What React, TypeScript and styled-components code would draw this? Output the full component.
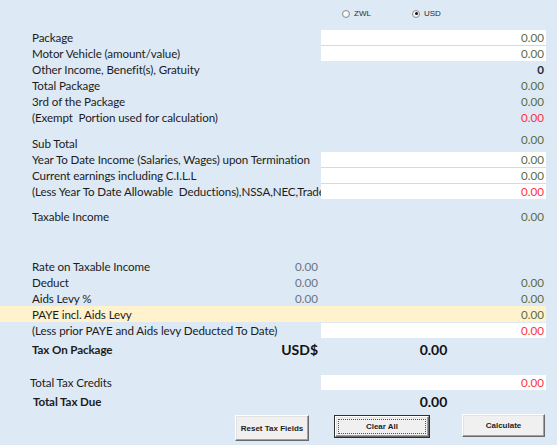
import React from "react";
import styled, { createGlobalStyle } from "styled-components";

const GlobalStyle = createGlobalStyle`
  html, body { margin: 0; padding: 0; background: #dde9f5; }
  * { box-sizing: border-box; }
`;

const Page = styled.div`
  width: 557px;
  height: 445px;
  overflow: hidden;
  background: #dde9f5;
  font-family: Lato, "Liberation Sans", sans-serif;
  font-size: 11.6px;
  color: #1c1c1c;
`;

const RadioBar = styled.div`
  height: 29px;
  display: flex;
  align-items: flex-start;
  padding: 9px 0 0 342px;
`;

const RadioItem = styled.label`
  display: flex;
  align-items: center;
  gap: 4px;
  width: 70px;
  font-family: "Liberation Sans", sans-serif;
  font-size: 8px;
  color: #2b2b2b;
`;

const RadioDot = styled.span<{ $on?: boolean }>`
  width: 8px;
  height: 8px;
  border-radius: 50%;
  border: 1px solid #8c8c8c;
  background: radial-gradient(circle at 40% 40%, #ffffff 0%, #f2f2f2 60%, #dcdcdc 100%);
  display: flex;
  align-items: center;
  justify-content: center;
  &::after {
    content: "";
    width: 3px;
    height: 3px;
    border-radius: 50%;
    background: ${(p) => (p.$on ? "#111" : "transparent")};
  }
`;

const Row = styled.div<{ $mt?: number; $h?: number; $hl?: boolean; $pl?: number }>`
  display: grid;
  grid-template-columns: ${(p) => 289 - ((p.$pl ?? 32) - 32)}px 225px;
  width: 546px;
  padding-left: ${(p) => p.$pl ?? 32}px;
  height: ${(p) => p.$h ?? 16}px;
  margin-top: ${(p) => p.$mt ?? 0}px;
  background: ${(p) => (p.$hl ? "#fff2cc" : "transparent")};
`;

const Label = styled.div<{ $bold?: boolean; $align?: string }>`
  display: flex;
  align-items: center;
  justify-content: space-between;
  height: 16px;
  align-self: ${(p) => p.$align ?? "center"};
  padding-right: 3px;
  white-space: nowrap;
  overflow: hidden;
  font-weight: ${(p) => (p.$bold ? 700 : 400)};
  letter-spacing: -0.1px;
`;

const MidValue = styled.span`
  color: #6b7482;
  letter-spacing: 0;
`;

const BigText = styled.span`
  font-size: 14px;
  font-weight: 700;
  color: #111;
  letter-spacing: 0;
`;

type Tone = "olive" | "red" | "dark";
const toneColor: Record<Tone, string> = {
  olive: "#5c6c48",
  red: "#ff3340",
  dark: "#1f2940",
};

const Value = styled.div<{ $box?: boolean; $sep?: boolean; $tone?: Tone; $align?: string; $bold?: boolean }>`
  display: flex;
  align-items: center;
  justify-content: flex-end;
  height: 16px;
  align-self: ${(p) => p.$align ?? "center"};
  padding-right: 2px;
  background: ${(p) => (p.$box ? "#ffffff" : "transparent")};
  border-top: 1px solid ${(p) => (p.$sep ? "#d9d9d9" : p.$box ? "#dde9f5" : "transparent")};
  color: ${(p) => toneColor[p.$tone ?? "olive"]};
  font-weight: ${(p) => (p.$bold ? 700 : 400)};
`;

const CenterValue = styled.div`
  display: flex;
  align-items: center;
  justify-content: center;
  font-size: 14px;
  font-weight: 700;
  color: #111;
`;

const ButtonBar = styled.div`
  display: flex;
  align-items: flex-start;
  padding-left: 235px;
  margin-top: 3px;
`;

const Button = styled.button<{ $w: number; $h: number; $mt: number; $ml: number; $focus?: boolean }>`
  position: relative;
  width: ${(p) => p.$w}px;
  height: ${(p) => p.$h}px;
  margin-top: ${(p) => p.$mt}px;
  margin-left: ${(p) => p.$ml}px;
  padding: 0;
  background: #f0f0f0;
  border: 1px solid;
  border-color: #ffffff #6a6a6a #6a6a6a #ffffff;
  box-shadow: inset -1px -1px 0 #a0a0a0, inset 1px 1px 0 #e3e3e3;
  outline: ${(p) => (p.$focus ? "1px solid #2e2e2e" : "none")};
  font-family: "Liberation Sans", sans-serif;
  font-size: 8px;
  font-weight: 700;
  color: #1e1e1e;
  &::after {
    content: "";
    position: absolute;
    inset: 2px;
    border: ${(p) => (p.$focus ? "1px dotted #555" : "none")};
  }
`;

export default function App() {
  return (
    <Page>
      <GlobalStyle />
      <RadioBar>
        <RadioItem>
          <RadioDot />
          ZWL
        </RadioItem>
        <RadioItem>
          <RadioDot $on />
          USD
        </RadioItem>
      </RadioBar>

      <Row>
        <Label>Package</Label>
        <Value $box>0.00</Value>
      </Row>
      <Row>
        <Label>Motor Vehicle (amount/value)</Label>
        <Value $box $sep>0.00</Value>
      </Row>
      <Row>
        <Label>Other Income, Benefit(s), Gratuity</Label>
        <Value $tone="dark" $bold>0</Value>
      </Row>
      <Row>
        <Label>Total Package</Label>
        <Value>0.00</Value>
      </Row>
      <Row>
        <Label>3rd of the Package</Label>
        <Value>0.00</Value>
      </Row>
      <Row>
        <Label>(Exempt&nbsp; Portion used for calculation)</Label>
        <Value $tone="red">0.00</Value>
      </Row>

      <Row $mt={6} $h={20}>
        <Label $align="end">Sub Total</Label>
        <Value $align="start">0.00</Value>
      </Row>
      <Row>
        <Label>Year To Date Income (Salaries, Wages) upon Termination</Label>
        <Value $box>0.00</Value>
      </Row>
      <Row>
        <Label>Current earnings including C.I.L.L</Label>
        <Value $box $sep>0.00</Value>
      </Row>
      <Row>
        <Label>(Less Year To Date Allowable&nbsp; Deductions),NSSA,NEC,Trade</Label>
        <Value $box $sep $tone="red">0.00</Value>
      </Row>

      <Row $mt={9}>
        <Label>Taxable Income</Label>
        <Value>0.00</Value>
      </Row>

      <Row $mt={34}>
        <Label>
          Rate on Taxable Income<MidValue>0.00</MidValue>
        </Label>
        <Value />
      </Row>
      <Row>
        <Label>
          Deduct<MidValue>0.00</MidValue>
        </Label>
        <Value>0.00</Value>
      </Row>
      <Row>
        <Label>
          Aids Levy %<MidValue>0.00</MidValue>
        </Label>
        <Value>0.00</Value>
      </Row>
      <Row $hl>
        <Label>PAYE incl. Aids Levy</Label>
        <Value>0.00</Value>
      </Row>
      <Row>
        <Label>(Less prior PAYE and Aids levy Deducted To Date)</Label>
        <Value $box $tone="red">0.00</Value>
      </Row>
      <Row $mt={2} $h={18}>
        <Label $bold $align="center">
          Tax On Package<BigText>USD$</BigText>
        </Label>
        <CenterValue>0.00</CenterValue>
      </Row>

      <Row $mt={16} $pl={30}>
        <Label>Total Tax Credits</Label>
        <Value $box $tone="red">0.00</Value>
      </Row>
      <Row $mt={2} $h={18} $pl={33}>
        <Label $bold>Total Tax Due</Label>
        <CenterValue>0.00</CenterValue>
      </Row>

      <ButtonBar>
        <Button $w={74} $h={26} $mt={2} $ml={0}>Reset Tax Fields</Button>
        <Button $w={94} $h={21} $mt={3} $ml={26} $focus>Clear All</Button>
        <Button $w={83} $h={23} $mt={1} $ml={33}>Calculate</Button>
      </ButtonBar>
    </Page>
  );
}
